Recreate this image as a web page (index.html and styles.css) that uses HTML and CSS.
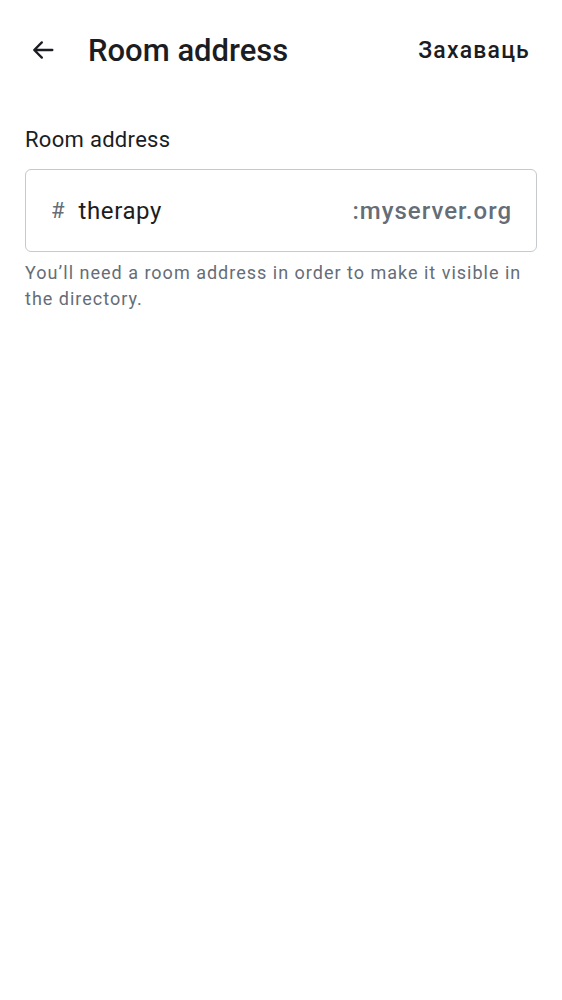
FILE: index.html
```html
<!DOCTYPE html>
<html>
<head>
<meta charset="utf-8">
<link rel="stylesheet" href="styles.css">
</head>
<body>
<header class="topbar">
  <div class="back">
    <svg width="28" height="28" viewBox="0 0 24 24"><path d="M20 12H5M11 5.5L4.5 12L11 18.5" fill="none" stroke="#1b1d22" stroke-width="2" stroke-linecap="round" stroke-linejoin="round"/></svg>
  </div>
  <h1 class="title">Room address</h1>
  <div class="action">Захаваць</div>
</header>
<main class="content">
  <label class="label">Room address</label>
  <div class="field">
    <span class="hash">#</span>
    <span class="value">therapy</span>
    <span class="suffix">:myserver.org</span>
  </div>
  <p class="hint">You’ll need a room address in order to make it visible in the directory.</p>
</main>
</body>
</html>
```

FILE: styles.css
```css
html, body {
  margin: 0;
  padding: 0;
  background: #ffffff;
  font-family: Roboto, "Noto Sans", sans-serif;
  color: #1b1d22;
}
.topbar {
  display: flex;
  align-items: center;
  height: 100px;
  padding: 0 32px 0 29px;
}
.back {
  width: 28px;
  height: 28px;
  display: flex;
  align-items: center;
  justify-content: center;
}
.title {
  margin: 0 0 0 31px;
  font-size: 31px;
  font-weight: 500;
  flex: 1;
  letter-spacing: 0;
}
.action {
  font-size: 23px;
  font-weight: 500;
  letter-spacing: 1.2px;
}
.content {
  padding: 26px 25px 0 25px;
  display: flex;
  flex-direction: column;
}
.label {
  font-size: 22px;
  line-height: 28px;
  letter-spacing: 0.3px;
  color: #1b1d22;
}
.field {
  margin-top: 15px;
  height: 81px;
  border: 1.5px solid #c6c9ce;
  border-radius: 6px;
  display: flex;
  align-items: center;
  padding: 0 24px 0 25px;
  font-size: 24px;
}
.hash {
  color: #656d77;
  font-size: 22px;
  margin-right: 14px;
}
.value {
  flex: 1;
  color: #1b1d22;
  letter-spacing: 0.6px;
}
.suffix {
  color: #656d77;
  font-weight: 500;
  letter-spacing: 1px;
}
.hint {
  margin: 8px 0 0 0;
  font-size: 18px;
  line-height: 26px;
  color: #656d77;
  letter-spacing: 1px;
}
```
